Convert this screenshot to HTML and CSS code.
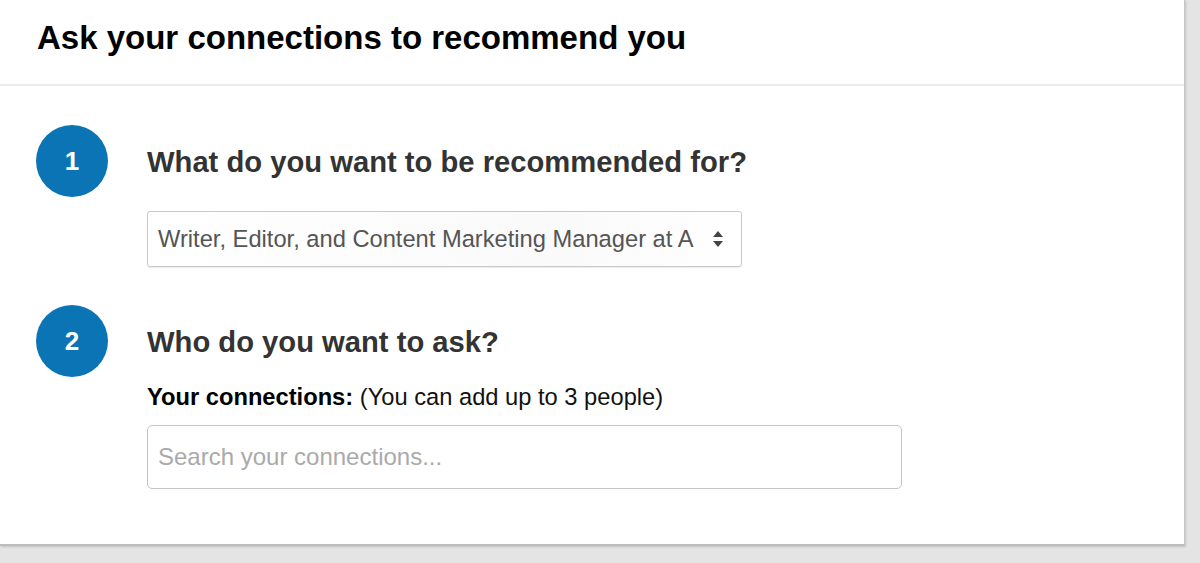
FILE: index.html
```html
<!DOCTYPE html>
<html lang="en">
<head>
  <meta charset="UTF-8">
  <title>Ask your connections to recommend you</title>
  <link rel="stylesheet" href="styles.css">
</head>
<body>
<div class="card">
  <div class="card-head">
    <h1>Ask your connections to recommend you</h1>
  </div>
  <div class="card-body">
    <div class="step">
      <div class="num">1</div>
      <div class="step-main">
        <h2>What do you want to be recommended for?</h2>
        <div class="select">
          <span class="select-text">Writer, Editor, and Content Marketing Manager at A</span>
          <svg class="arrows" width="12" height="18" viewBox="0 0 12 18">
            <path d="M6 1 L11 7 L1 7 Z" fill="#444"/>
            <path d="M6 17 L11 11 L1 11 Z" fill="#444"/>
          </svg>
        </div>
      </div>
    </div>
    <div class="step">
      <div class="num">2</div>
      <div class="step-main">
        <h2>Who do you want to ask?</h2>
        <p class="conn-label"><b>Your connections:</b> (You can add up to 3 people)</p>
        <input class="search" type="text" placeholder="Search your connections...">
      </div>
    </div>
  </div>
</div>
</body>
</html>
```

FILE: styles.css
```css
body { margin:0; background:#e4e4e4; font-family: "Liberation Sans", Arial, sans-serif; height:563px; overflow:hidden; }
.card { width:1184px; height:544px; background:#fff; border-right:1px solid #c8c8c8; border-bottom:2px solid #bdbdbd; box-shadow:1px 1px 2px rgba(0,0,0,0.15); }
.card-head { height:86px; border-bottom:2px solid #ebebeb; padding-left:37px; box-sizing:border-box; }
h1 { margin:0; padding-top:20px; font-size:33px; line-height:36px; font-weight:bold; color:#000; }
.card-body { padding:39px 0 0 36px; }
.step { display:flex; gap:39px; margin-bottom:38px; }
.num { width:72px; height:72px; border-radius:50%; background:#0a74b4; color:#fff; font-weight:bold; font-size:26px; display:flex; align-items:center; justify-content:center; flex-shrink:0; }
.step-main { padding-top:20px; }
h2 { margin:0; font-size:29.2px; font-weight:bold; color:#333; line-height:34px; }
.select { margin-top:32px; width:595px; height:56px; box-sizing:border-box; border:1px solid #c9c9c9; border-radius:3px; background:linear-gradient(to right,#fff 0%,#fafafa 70%,#fff 100%); display:flex; align-items:center; justify-content:space-between; padding:0 17px 0 10px; box-shadow:0 1px 1px rgba(0,0,0,0.08); }
.select-text { font-size:23.7px; color:#555; white-space:nowrap; }
.conn-label { margin:24px 0 0; font-size:23.7px; line-height:28px; color:#111; }
.conn-label b { color:#000; }
.search { display:block; margin-top:14px; width:755px; height:64px; box-sizing:border-box; border:1px solid #c4c4c4; border-radius:5px; padding:0 10px; font-size:24px; font-family:"Liberation Sans", Arial, sans-serif; color:#333; outline:none; }
.search::placeholder { color:#aaa; }
```
